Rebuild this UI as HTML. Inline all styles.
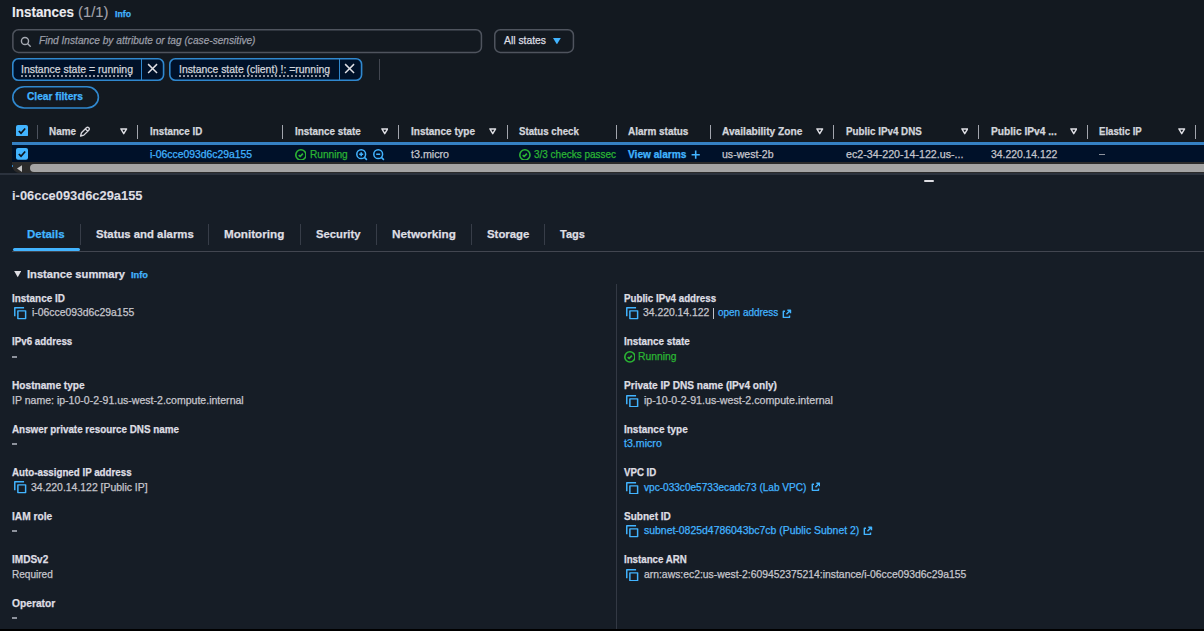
<!DOCTYPE html>
<html lang="en"><head><meta charset="utf-8"><title>Instances | EC2</title>
<style>
html,body{margin:0;padding:0;}
body{width:1204px;height:631px;background:#161d26;overflow:hidden;position:relative;font-family:"Liberation Sans",sans-serif;}
#r{position:absolute;left:0;top:0;width:1204px;height:631px;overflow:hidden;}
#r div,#r svg,#r span{position:absolute;display:block;}
#r span{white-space:nowrap;transform-origin:0 0;-webkit-text-stroke:0.25px currentColor;}
</style></head><body><div id="r">
<div style="left:0px;top:0px;width:1204px;height:174px;background:#131920;"></div>
<svg style="left:11.7px;top:29.3px;width:470.3px;height:24.2px;overflow:visible" viewBox="0 0 470.3 24.2"><rect x="0.75" y="0.75" width="468.8" height="22.7" rx="5.5" fill="none" stroke="#4f545e" stroke-width="1.5"/></svg>
<svg style="left:494px;top:29.3px;width:80.2px;height:24.2px;overflow:visible" viewBox="0 0 80.2 24.2"><rect x="0.75" y="0.75" width="78.7" height="22.7" rx="5.5" fill="none" stroke="#4f545e" stroke-width="1.5"/></svg>
<svg style="left:11.8px;top:58px;width:152.4px;height:23px;overflow:visible" viewBox="0 0 152.4 23"><rect x="0.8" y="0.8" width="150.8" height="21.4" rx="5.5" fill="#001129" stroke="#3088ce" stroke-width="1.6"/></svg>
<div style="left:141px;top:58.5px;width:1px;height:22px;background:#3088ce;"></div>
<svg style="left:168.8px;top:58px;width:193.4px;height:23px;overflow:visible" viewBox="0 0 193.4 23"><rect x="0.8" y="0.8" width="191.8" height="21.4" rx="5.5" fill="#001129" stroke="#3088ce" stroke-width="1.6"/></svg>
<div style="left:339px;top:58.5px;width:1px;height:22px;background:#3088ce;"></div>
<div style="left:21px;top:75.3px;width:112px;height:1.3px;background:repeating-linear-gradient(90deg,#9296a0 0 2px,transparent 2px 4px);"></div>
<div style="left:179px;top:75.3px;width:151px;height:1.3px;background:repeating-linear-gradient(90deg,#9296a0 0 2px,transparent 2px 4px);"></div>
<div style="left:378.5px;top:59px;width:1px;height:21px;background:#424650;"></div>
<svg style="left:11.8px;top:86px;width:87.2px;height:22.8px;overflow:visible" viewBox="0 0 87.2 22.8"><rect x="0.8" y="0.8" width="85.60000000000001" height="21.2" rx="11.4" fill="none" stroke="#3088ce" stroke-width="1.6"/></svg>
<div style="left:36.5px;top:125px;width:1px;height:13.5px;background:#4d535e;"></div>
<div style="left:137px;top:124.6px;width:1.4px;height:14.2px;background:#a2a5ad;"></div>
<div style="left:282px;top:124.6px;width:1.4px;height:14.2px;background:#a2a5ad;"></div>
<div style="left:398px;top:124.6px;width:1.4px;height:14.2px;background:#a2a5ad;"></div>
<div style="left:507px;top:124.6px;width:1.4px;height:14.2px;background:#a2a5ad;"></div>
<div style="left:616px;top:124.6px;width:1.4px;height:14.2px;background:#a2a5ad;"></div>
<div style="left:710px;top:124.6px;width:1.4px;height:14.2px;background:#a2a5ad;"></div>
<div style="left:833px;top:124.6px;width:1.4px;height:14.2px;background:#a2a5ad;"></div>
<div style="left:978px;top:124.6px;width:1.4px;height:14.2px;background:#a2a5ad;"></div>
<div style="left:1087px;top:124.6px;width:1.4px;height:14.2px;background:#a2a5ad;"></div>
<div style="left:1195px;top:124.6px;width:1.4px;height:14.2px;background:#a2a5ad;"></div>
<div style="left:12px;top:144px;width:1192px;height:18px;background:#001129;"></div>
<div style="left:12px;top:142.4px;width:1192px;height:2.2px;background:#3581c4;"></div>
<div style="left:12px;top:162px;width:1192px;height:10.5px;background:#2b2b2b;border-bottom-left-radius:8px;"></div>
<div style="left:29.8px;top:163.8px;width:1184px;height:7.8px;background:#a4a4a4;border-radius:4px;"></div>
<div style="left:12px;top:164.6px;width:1px;height:2.2px;background:#2f7fc0;"></div>
<div style="left:0px;top:173.4px;width:1204px;height:1.8px;background:#2b323d;"></div>
<div style="left:923.5px;top:180.3px;width:10.4px;height:2.1px;background:#dedee3;border-radius:1px;"></div>
<div style="left:12px;top:250.9px;width:1192px;height:1px;background:#424650;"></div>
<div style="left:13px;top:248.1px;width:66.8px;height:3.3px;background:#42b4ff;border-radius:2px;"></div>
<div style="left:79.5px;top:223.6px;width:1.3px;height:21.2px;background:#373d48;"></div>
<div style="left:208.1px;top:223.6px;width:1.3px;height:21.2px;background:#373d48;"></div>
<div style="left:299.59999999999997px;top:223.6px;width:1.3px;height:21.2px;background:#373d48;"></div>
<div style="left:375.79999999999995px;top:223.6px;width:1.3px;height:21.2px;background:#373d48;"></div>
<div style="left:470.7px;top:223.6px;width:1.3px;height:21.2px;background:#373d48;"></div>
<div style="left:543.8px;top:223.6px;width:1.3px;height:21.2px;background:#373d48;"></div>
<div style="left:615.6px;top:284px;width:1.2px;height:346px;background:#333944;"></div>
<div style="left:713.3px;top:308px;width:1.2px;height:10.6px;background:#c0c0c8;"></div>
<div style="left:0px;top:629px;width:1204px;height:2px;background:#000;"></div>
<div style="left:11.6px;top:356.1px;width:5.6px;height:1.5px;background:#8d929c;"></div>
<div style="left:11.6px;top:443.2px;width:5.6px;height:1.5px;background:#8d929c;"></div>
<div style="left:11.6px;top:530.2px;width:5.6px;height:1.5px;background:#8d929c;"></div>
<div style="left:11.6px;top:617.2px;width:5.6px;height:1.5px;background:#8d929c;"></div>
<div style="left:1099.2px;top:153.8px;width:5.6px;height:1.5px;background:#8d929c;"></div>
<svg style="left:20.4px;top:35.9px;width:11.4px;height:11.4px" viewBox="0 0 16 16" fill="none" stroke="#a6aab3" stroke-width="2" stroke-linecap="butt" stroke-linejoin="round"><circle cx="7" cy="7" r="5"/><path d="m15 15-4.5-4.5"/></svg>
<svg style="left:146.6px;top:63.1px;width:11.2px;height:11.2px" viewBox="0 0 16 16" fill="none" stroke="#dedee3" stroke-width="2.1" stroke-linecap="butt" stroke-linejoin="round"><path d="M1.6 1.6 14.4 14.4M14.4 1.6 1.6 14.4"/></svg>
<svg style="left:344.0px;top:63.1px;width:11.2px;height:11.2px" viewBox="0 0 16 16" fill="none" stroke="#dedee3" stroke-width="2.1" stroke-linecap="butt" stroke-linejoin="round"><path d="M1.6 1.6 14.4 14.4M14.4 1.6 1.6 14.4"/></svg>
<svg style="left:553.4px;top:37.8px;width:7.8px;height:6.4px" viewBox="0 0 8 6.5"><path d="M0 0h8L4 6.5Z" fill="#42b4ff"/></svg>
<svg style="left:16px;top:124.5px;width:12px;height:11.7px" viewBox="0 0 12 12" preserveAspectRatio="none"><rect x="0" y="0" width="12" height="12" rx="2" fill="#42b4ff"/><path d="M2.8 6.2 5 8.4 9.2 3.6" fill="none" stroke="#0f141a" stroke-width="1.7"/></svg>
<svg style="left:16px;top:148px;width:12px;height:11.7px" viewBox="0 0 12 12" preserveAspectRatio="none"><rect x="0" y="0" width="12" height="12" rx="2" fill="#42b4ff"/><path d="M2.8 6.2 5 8.4 9.2 3.6" fill="none" stroke="#0f141a" stroke-width="1.7"/></svg>
<svg style="left:79.2px;top:125.5px;width:11.6px;height:11.6px" viewBox="0 0 16 16" fill="none" stroke="#d4d4da" stroke-width="1.9" stroke-linecap="butt" stroke-linejoin="round"><g transform="translate(8 8) rotate(45)"><path d="M-2.3 4.2V-5.4a2.3 2.3 0 0 1 4.6 0V4.2L0 8.2ZM-2.3 -3.4H2.3"/></g></svg>
<svg style="left:120px;top:128.1px;width:7.5px;height:6.8px" viewBox="0 0 10 9" fill="none" stroke="#dedee3" stroke-width="1.9" stroke-linejoin="round"><path d="M1.2 1.2h7.6L5 7.6Z"/></svg>
<svg style="left:380.6px;top:128.1px;width:7.5px;height:6.8px" viewBox="0 0 10 9" fill="none" stroke="#dedee3" stroke-width="1.9" stroke-linejoin="round"><path d="M1.2 1.2h7.6L5 7.6Z"/></svg>
<svg style="left:489.3px;top:128.1px;width:7.5px;height:6.8px" viewBox="0 0 10 9" fill="none" stroke="#dedee3" stroke-width="1.9" stroke-linejoin="round"><path d="M1.2 1.2h7.6L5 7.6Z"/></svg>
<svg style="left:816px;top:128.1px;width:7.5px;height:6.8px" viewBox="0 0 10 9" fill="none" stroke="#dedee3" stroke-width="1.9" stroke-linejoin="round"><path d="M1.2 1.2h7.6L5 7.6Z"/></svg>
<svg style="left:960.6px;top:128.1px;width:7.5px;height:6.8px" viewBox="0 0 10 9" fill="none" stroke="#dedee3" stroke-width="1.9" stroke-linejoin="round"><path d="M1.2 1.2h7.6L5 7.6Z"/></svg>
<svg style="left:1069.5px;top:128.1px;width:7.5px;height:6.8px" viewBox="0 0 10 9" fill="none" stroke="#dedee3" stroke-width="1.9" stroke-linejoin="round"><path d="M1.2 1.2h7.6L5 7.6Z"/></svg>
<svg style="left:1178px;top:128.1px;width:7.5px;height:6.8px" viewBox="0 0 10 9" fill="none" stroke="#dedee3" stroke-width="1.9" stroke-linejoin="round"><path d="M1.2 1.2h7.6L5 7.6Z"/></svg>
<svg style="left:294.5px;top:148.7px;width:11.8px;height:11.8px" viewBox="0 0 16 16" fill="none" stroke="#2bb534" stroke-width="2.2" stroke-linecap="butt" stroke-linejoin="round"><circle cx="8" cy="8" r="6.9"/><path d="m5 8.2 2 2 3.7-3.9" stroke-width="2.3"/></svg>
<svg style="left:518.8px;top:148.7px;width:11.8px;height:11.8px" viewBox="0 0 16 16" fill="none" stroke="#2bb534" stroke-width="2.2" stroke-linecap="butt" stroke-linejoin="round"><circle cx="8" cy="8" r="6.9"/><path d="m5 8.2 2 2 3.7-3.9" stroke-width="2.3"/></svg>
<svg style="left:623.6px;top:350.9px;width:11.8px;height:11.8px" viewBox="0 0 16 16" fill="none" stroke="#2bb534" stroke-width="2.2" stroke-linecap="butt" stroke-linejoin="round"><circle cx="8" cy="8" r="6.9"/><path d="m5 8.2 2 2 3.7-3.9" stroke-width="2.3"/></svg>
<svg style="left:355.9px;top:148.7px;width:12px;height:12px" viewBox="0 0 12 12" fill="none" stroke="#42b4ff" stroke-width="1.5" stroke-linecap="butt" stroke-linejoin="round"><circle cx="5.2" cy="5.2" r="4.4"/><path d="M8.4 8.4l2.5 2.5M3.2 5.2h4M5.2 3.2v4"/></svg>
<svg style="left:373px;top:148.7px;width:12px;height:12px" viewBox="0 0 12 12" fill="none" stroke="#42b4ff" stroke-width="1.5" stroke-linecap="butt" stroke-linejoin="round"><circle cx="5.2" cy="5.2" r="4.4"/><path d="M8.4 8.4l2.5 2.5M3.2 5.2h4"/></svg>
<svg style="left:691.2px;top:149.9px;width:9.4px;height:9.4px" viewBox="0 0 16 16" fill="none" stroke="#42b4ff" stroke-width="2.7" stroke-linecap="butt" stroke-linejoin="round"><path d="M8 1v14M15 8H1"/></svg>
<svg style="left:13.5px;top:271.4px;width:7.5px;height:6.3px" viewBox="0 0 8 7"><path d="M0 0h8L4 7Z" fill="#dedee3"/></svg>
<svg style="left:16.8px;top:164.7px;width:5.3px;height:7.2px" viewBox="0 0 5 6.5" preserveAspectRatio="none"><path d="M5 0v6.5L0 3.25Z" fill="#c4c4c4"/></svg>
<svg style="left:14.4px;top:307.2px;width:12.4px;height:12.4px" viewBox="0 0 16 16" fill="none" stroke="#42b4ff" stroke-width="1.9" stroke-linecap="butt" stroke-linejoin="round"><path d="M15 5H5v10h10V5Z"/><path d="M13 1H1v11"/></svg>
<svg style="left:14.4px;top:481.2px;width:12.4px;height:12.4px" viewBox="0 0 16 16" fill="none" stroke="#42b4ff" stroke-width="1.9" stroke-linecap="butt" stroke-linejoin="round"><path d="M15 5H5v10h10V5Z"/><path d="M13 1H1v11"/></svg>
<svg style="left:626.3px;top:307.2px;width:12.4px;height:12.4px" viewBox="0 0 16 16" fill="none" stroke="#42b4ff" stroke-width="1.9" stroke-linecap="butt" stroke-linejoin="round"><path d="M15 5H5v10h10V5Z"/><path d="M13 1H1v11"/></svg>
<svg style="left:626.3px;top:394.7px;width:12.4px;height:12.4px" viewBox="0 0 16 16" fill="none" stroke="#42b4ff" stroke-width="1.9" stroke-linecap="butt" stroke-linejoin="round"><path d="M15 5H5v10h10V5Z"/><path d="M13 1H1v11"/></svg>
<svg style="left:626.3px;top:481.7px;width:12.4px;height:12.4px" viewBox="0 0 16 16" fill="none" stroke="#42b4ff" stroke-width="1.9" stroke-linecap="butt" stroke-linejoin="round"><path d="M15 5H5v10h10V5Z"/><path d="M13 1H1v11"/></svg>
<svg style="left:626.3px;top:525.2px;width:12.4px;height:12.4px" viewBox="0 0 16 16" fill="none" stroke="#42b4ff" stroke-width="1.9" stroke-linecap="butt" stroke-linejoin="round"><path d="M15 5H5v10h10V5Z"/><path d="M13 1H1v11"/></svg>
<svg style="left:626.3px;top:568.5px;width:12.4px;height:12.4px" viewBox="0 0 16 16" fill="none" stroke="#42b4ff" stroke-width="1.9" stroke-linecap="butt" stroke-linejoin="round"><path d="M15 5H5v10h10V5Z"/><path d="M13 1H1v11"/></svg>
<svg style="left:782.1px;top:308.7px;width:9.7px;height:9.7px" viewBox="0 0 16 16" fill="none" stroke="#42b4ff" stroke-width="2.4" stroke-linecap="butt" stroke-linejoin="round"><path d="M5 3.6H2.2V13.8H12.4V10.6M8.8 2H14V7.2M13.8 2.2 7.4 8.6"/></svg>
<svg style="left:810.5px;top:482.1px;width:9.7px;height:9.7px" viewBox="0 0 16 16" fill="none" stroke="#42b4ff" stroke-width="2.4" stroke-linecap="butt" stroke-linejoin="round"><path d="M5 3.6H2.2V13.8H12.4V10.6M8.8 2H14V7.2M13.8 2.2 7.4 8.6"/></svg>
<svg style="left:863.2px;top:525.5999999999999px;width:9.7px;height:9.7px" viewBox="0 0 16 16" fill="none" stroke="#42b4ff" stroke-width="2.4" stroke-linecap="butt" stroke-linejoin="round"><path d="M5 3.6H2.2V13.8H12.4V10.6M8.8 2H14V7.2M13.8 2.2 7.4 8.6"/></svg>
<span id="t0" style="left:12px;top:3.00px;font-size:14.4px;line-height:18px;font-weight:700;color:#ebebf0;transform:scaleX(0.9339);-webkit-text-stroke-width:.1px;">Instances</span>
<span id="t1" style="left:77.5px;top:3.00px;font-size:14.4px;line-height:18px;font-weight:400;color:#a4a4ad;transform:scaleX(1.0306);-webkit-text-stroke-width:.1px;">(1/1)</span>
<span id="t2" style="left:115px;top:7.00px;font-size:9.6px;line-height:13px;font-weight:700;color:#42b4ff;transform:scaleX(0.9094);">Info</span>
<span id="t3" style="left:38.5px;top:34.00px;font-size:10.4px;line-height:13px;font-weight:400;color:#9a9da7;font-style:italic;transform:scaleX(0.9762);">Find Instance by attribute or tag (case-sensitive)</span>
<span id="t4" style="left:504px;top:34.00px;font-size:10.4px;line-height:13px;font-weight:400;color:#dedee3;transform:scaleX(0.9963);">All states</span>
<span id="t5" style="left:21px;top:63.00px;font-size:10.4px;line-height:13px;font-weight:400;color:#d2d5db;transform:scaleX(1.0072);">Instance state = running</span>
<span id="t6" style="left:179px;top:63.00px;font-size:10.4px;line-height:13px;font-weight:400;color:#d2d5db;transform:scaleX(0.9997);">Instance state (client) !: =running</span>
<span id="t7" style="left:27px;top:90.00px;font-size:10.4px;line-height:13px;font-weight:700;color:#42b4ff;transform:scaleX(0.9792);">Clear filters</span>
<span id="t8" style="left:49px;top:125.00px;font-size:10.4px;line-height:13px;font-weight:700;color:#d3d6dc;transform:scaleX(0.9536);">Name</span>
<span id="t9" style="left:150px;top:125.00px;font-size:10.4px;line-height:13px;font-weight:700;color:#d3d6dc;transform:scaleX(0.9434);">Instance ID</span>
<span id="t10" style="left:295px;top:125.00px;font-size:10.4px;line-height:13px;font-weight:700;color:#d3d6dc;transform:scaleX(0.9479);">Instance state</span>
<span id="t11" style="left:411px;top:125.00px;font-size:10.4px;line-height:13px;font-weight:700;color:#d3d6dc;transform:scaleX(0.9635);">Instance type</span>
<span id="t12" style="left:519.4px;top:125.00px;font-size:10.4px;line-height:13px;font-weight:700;color:#d3d6dc;transform:scaleX(0.9328);">Status check</span>
<span id="t13" style="left:628px;top:125.00px;font-size:10.4px;line-height:13px;font-weight:700;color:#d3d6dc;transform:scaleX(0.9594);">Alarm status</span>
<span id="t14" style="left:722.4px;top:125.00px;font-size:10.4px;line-height:13px;font-weight:700;color:#d3d6dc;transform:scaleX(0.9770);">Availability Zone</span>
<span id="t15" style="left:845.5px;top:125.00px;font-size:10.4px;line-height:13px;font-weight:700;color:#d3d6dc;transform:scaleX(0.9444);">Public IPv4 DNS</span>
<span id="t16" style="left:990.7px;top:125.00px;font-size:10.4px;line-height:13px;font-weight:700;color:#d3d6dc;transform:scaleX(0.9821);">Public IPv4 ...</span>
<span id="t17" style="left:1099.4px;top:125.00px;font-size:10.4px;line-height:13px;font-weight:700;color:#d3d6dc;transform:scaleX(0.9260);">Elastic IP</span>
<span id="t18" style="left:150px;top:148.00px;font-size:10.4px;line-height:13px;font-weight:400;color:#42b4ff;transform:scaleX(0.9974);">i-06cce093d6c29a155</span>
<span id="t19" style="left:309.6px;top:148.00px;font-size:10.4px;line-height:13px;font-weight:400;color:#2bb534;transform:scaleX(0.9737);">Running</span>
<span id="t20" style="left:411px;top:148.00px;font-size:10.4px;line-height:13px;font-weight:400;color:#c6c6cd;transform:scaleX(1.0283);">t3.micro</span>
<span id="t21" style="left:534px;top:148.00px;font-size:10.4px;line-height:13px;font-weight:400;color:#2bb534;transform:scaleX(0.9592);">3/3 checks passec</span>
<span id="t22" style="left:628px;top:148.00px;font-size:10.4px;line-height:13px;font-weight:700;color:#42b4ff;transform:scaleX(0.9751);">View alarms</span>
<span id="t23" style="left:722.4px;top:148.00px;font-size:10.4px;line-height:13px;font-weight:400;color:#c6c6cd;transform:scaleX(1.0152);">us-west-2b</span>
<span id="t24" style="left:845.5px;top:148.00px;font-size:10.4px;line-height:13px;font-weight:400;color:#c6c6cd;transform:scaleX(1.0273);">ec2-34-220-14-122.us-...</span>
<span id="t25" style="left:990.7px;top:148.00px;font-size:10.4px;line-height:13px;font-weight:400;color:#c6c6cd;transform:scaleX(0.9977);">34.220.14.122</span>
<span id="t26" style="left:12px;top:187.00px;font-size:13.6px;line-height:17px;font-weight:700;color:#dedee3;transform:scaleX(0.9486);-webkit-text-stroke-width:.1px;">i-06cce093d6c29a155</span>
<span id="t27" style="left:27.4px;top:227.00px;font-size:11.6px;line-height:14px;font-weight:700;color:#42b4ff;transform:scaleX(0.9887);">Details</span>
<span id="t28" style="left:95.7px;top:227.00px;font-size:11.6px;line-height:14px;font-weight:700;color:#dedee3;transform:scaleX(0.9782);">Status and alarms</span>
<span id="t29" style="left:224.3px;top:227.00px;font-size:11.6px;line-height:14px;font-weight:700;color:#dedee3;transform:scaleX(1.0068);">Monitoring</span>
<span id="t30" style="left:316.1px;top:227.00px;font-size:11.6px;line-height:14px;font-weight:700;color:#dedee3;transform:scaleX(0.9702);">Security</span>
<span id="t31" style="left:391.8px;top:227.00px;font-size:11.6px;line-height:14px;font-weight:700;color:#dedee3;transform:scaleX(1.0120);">Networking</span>
<span id="t32" style="left:486.7px;top:227.00px;font-size:11.6px;line-height:14px;font-weight:700;color:#dedee3;transform:scaleX(0.9821);">Storage</span>
<span id="t33" style="left:560.1px;top:227.00px;font-size:11.6px;line-height:14px;font-weight:700;color:#dedee3;transform:scaleX(0.9503);">Tags</span>
<span id="t34" style="left:26.7px;top:267.00px;font-size:11.3px;line-height:14px;font-weight:700;color:#dedee3;transform:scaleX(0.9877);">Instance summary</span>
<span id="t35" style="left:131px;top:268.00px;font-size:9.4px;line-height:13px;font-weight:700;color:#42b4ff;transform:scaleX(0.9891);">Info</span>
<span id="t36" style="left:12px;top:292.00px;font-size:10.4px;line-height:13px;font-weight:700;color:#dedee3;transform:scaleX(0.9524);">Instance ID</span>
<span id="t37" style="left:32.4px;top:306.00px;font-size:10.4px;line-height:13px;font-weight:400;color:#c6c6cd;transform:scaleX(0.9994);">i-06cce093d6c29a155</span>
<span id="t38" style="left:12px;top:335.00px;font-size:10.4px;line-height:13px;font-weight:700;color:#dedee3;transform:scaleX(0.9404);">IPv6 address</span>
<span id="t39" style="left:12px;top:379.00px;font-size:10.4px;line-height:13px;font-weight:700;color:#dedee3;transform:scaleX(0.9758);">Hostname type</span>
<span id="t40" style="left:12px;top:394.00px;font-size:10.4px;line-height:13px;font-weight:400;color:#c6c6cd;transform:scaleX(1.0139);">IP name: ip-10-0-2-91.us-west-2.compute.internal</span>
<span id="t41" style="left:12px;top:423.00px;font-size:10.4px;line-height:13px;font-weight:700;color:#dedee3;transform:scaleX(0.9481);">Answer private resource DNS name</span>
<span id="t42" style="left:12px;top:466.00px;font-size:10.4px;line-height:13px;font-weight:700;color:#dedee3;transform:scaleX(0.9386);">Auto-assigned IP address</span>
<span id="t43" style="left:30.9px;top:481.00px;font-size:10.4px;line-height:13px;font-weight:400;color:#c6c6cd;transform:scaleX(1.0041);">34.220.14.122 [Public IP]</span>
<span id="t44" style="left:12px;top:510.00px;font-size:10.4px;line-height:13px;font-weight:700;color:#dedee3;transform:scaleX(0.9829);">IAM role</span>
<span id="t45" style="left:12px;top:553.00px;font-size:10.4px;line-height:13px;font-weight:700;color:#dedee3;transform:scaleX(0.9668);">IMDSv2</span>
<span id="t46" style="left:12px;top:568.00px;font-size:10.4px;line-height:13px;font-weight:400;color:#c6c6cd;transform:scaleX(0.9675);">Required</span>
<span id="t47" style="left:12px;top:597.00px;font-size:10.4px;line-height:13px;font-weight:700;color:#dedee3;transform:scaleX(0.9865);">Operator</span>
<span id="t48" style="left:624px;top:292.00px;font-size:10.4px;line-height:13px;font-weight:700;color:#dedee3;transform:scaleX(0.9380);">Public IPv4 address</span>
<span id="t49" style="left:642.9px;top:306.00px;font-size:10.4px;line-height:13px;font-weight:400;color:#c6c6cd;transform:scaleX(0.9977);">34.220.14.122</span>
<span id="t50" style="left:718.1px;top:306.00px;font-size:10.4px;line-height:13px;font-weight:400;color:#42b4ff;transform:scaleX(0.9576);">open address</span>
<span id="t51" style="left:624px;top:335.00px;font-size:10.4px;line-height:13px;font-weight:700;color:#dedee3;transform:scaleX(0.9479);">Instance state</span>
<span id="t52" style="left:638.4px;top:350.00px;font-size:10.4px;line-height:13px;font-weight:400;color:#2bb534;transform:scaleX(0.9918);">Running</span>
<span id="t53" style="left:624px;top:379.00px;font-size:10.4px;line-height:13px;font-weight:700;color:#dedee3;transform:scaleX(0.9716);">Private IP DNS name (IPv4 only)</span>
<span id="t54" style="left:644.4px;top:394.00px;font-size:10.4px;line-height:13px;font-weight:400;color:#c6c6cd;transform:scaleX(1.0253);">ip-10-0-2-91.us-west-2.compute.internal</span>
<span id="t55" style="left:624px;top:423.00px;font-size:10.4px;line-height:13px;font-weight:700;color:#dedee3;transform:scaleX(0.9590);">Instance type</span>
<span id="t56" style="left:624px;top:437.00px;font-size:10.4px;line-height:13px;font-weight:400;color:#42b4ff;transform:scaleX(1.0229);">t3.micro</span>
<span id="t57" style="left:624px;top:466.00px;font-size:10.4px;line-height:13px;font-weight:700;color:#dedee3;transform:scaleX(0.9320);">VPC ID</span>
<span id="t58" style="left:644.4px;top:481.00px;font-size:10.4px;line-height:13px;font-weight:400;color:#42b4ff;transform:scaleX(0.9695);">vpc-033c0e5733ecadc73 (Lab VPC)</span>
<span id="t59" style="left:624px;top:510.00px;font-size:10.4px;line-height:13px;font-weight:700;color:#dedee3;transform:scaleX(0.9649);">Subnet ID</span>
<span id="t60" style="left:644.2px;top:524.00px;font-size:10.4px;line-height:13px;font-weight:400;color:#42b4ff;transform:scaleX(1.0045);">subnet-0825d4786043bc7cb (Public Subnet 2)</span>
<span id="t61" style="left:624px;top:553.00px;font-size:10.4px;line-height:13px;font-weight:700;color:#dedee3;transform:scaleX(0.9334);">Instance ARN</span>
<span id="t62" style="left:644.2px;top:568.00px;font-size:10.4px;line-height:13px;font-weight:400;color:#c6c6cd;transform:scaleX(0.9981);">arn:aws:ec2:us-west-2:609452375214:instance/i-06cce093d6c29a155</span>
</div></body></html>
